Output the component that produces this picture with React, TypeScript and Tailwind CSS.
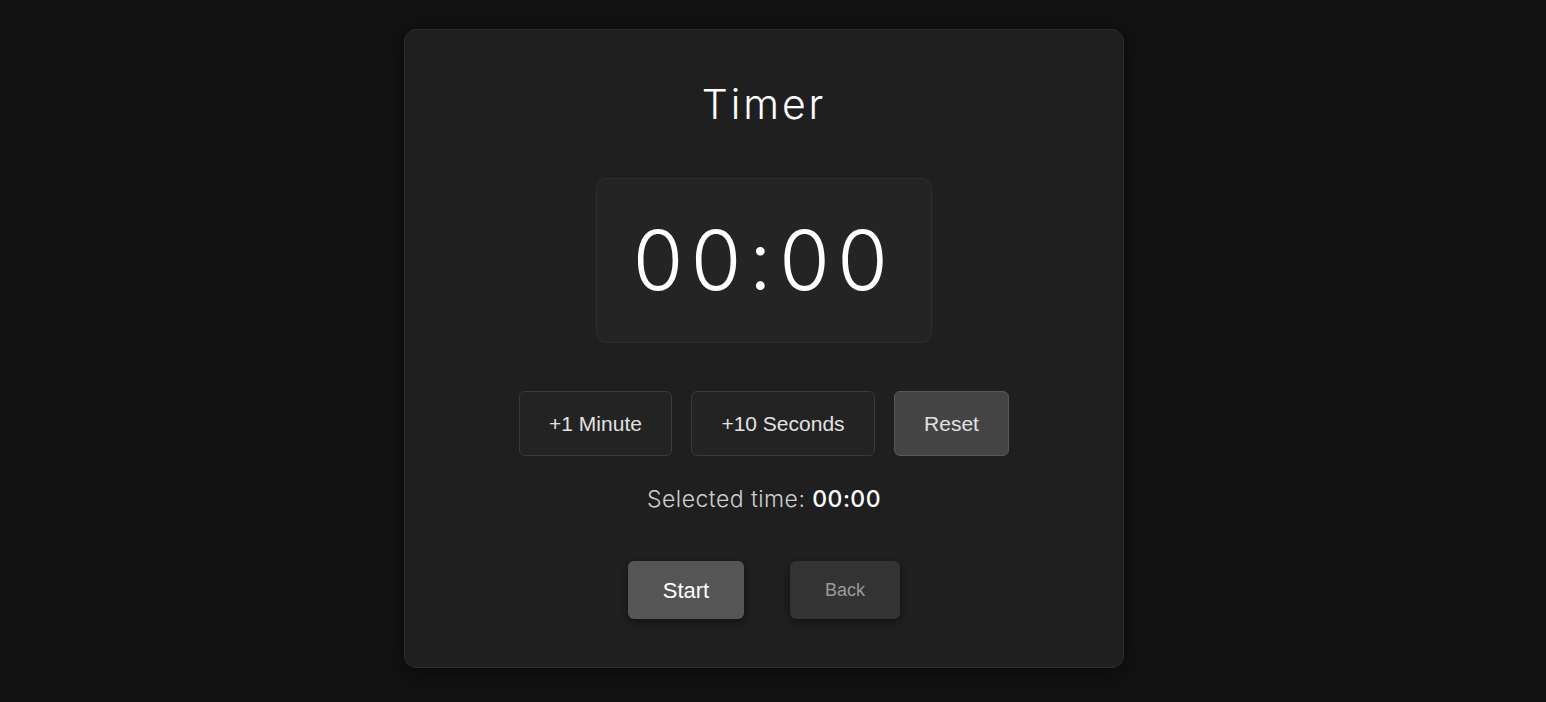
export default function App() {
  return (
    <div className="flex min-h-[702px] w-full justify-center bg-[#121212] pr-[18px] pt-[29px] font-['Inter',sans-serif]">
      <div className="flex h-fit w-[720px] flex-col items-center rounded-xl border border-[#2c2c2c] bg-[#1f1f1f] pb-[48px] pt-[50px] shadow-[0_4px_24px_rgba(0,0,0,0.5)]">
        <h1 className="text-[41px] font-light leading-[48px] tracking-[0.07em] text-white">
          Timer
        </h1>

        <div className="mt-[50px] flex h-[165px] w-[336px] items-center justify-center rounded-[10px] border border-[#2e2e2e] bg-[#242424]">
          <span className="text-[82px] font-light leading-none tracking-[0.09em] text-white">
            00:00
          </span>
        </div>

        <div className="mt-[48px] flex gap-[19px] font-['Liberation_Sans',sans-serif] text-[21px] text-[#e2e2e2]">
          <button className="h-[65px] w-[153px] rounded-md border border-[#3a3a3a] bg-[#232323]">
            +1 Minute
          </button>
          <button className="h-[65px] w-[184px] rounded-md border border-[#3a3a3a] bg-[#232323]">
            +10 Seconds
          </button>
          <button className="h-[65px] w-[115px] rounded-md border border-[#575757] bg-[#444444]">
            Reset
          </button>
        </div>

        <p className="mt-[28px] text-[23px] font-light leading-[30px] tracking-[0.02em] text-[#cfcfcf]">
          Selected time: <span className="font-medium text-white">00:00</span>
        </p>

        <div className="mt-[47px] flex gap-[46px] font-['Liberation_Sans',sans-serif]">
          <button className="h-[58px] w-[116px] rounded-md bg-[#555555] text-[22px] text-white shadow-[0_3px_8px_rgba(0,0,0,0.45)]">
            Start
          </button>
          <button className="h-[58px] w-[110px] rounded-md bg-[#333333] text-[18px] text-[#9a9a9a] shadow-[0_3px_8px_rgba(0,0,0,0.45)]">
            Back
          </button>
        </div>
      </div>
    </div>
  );
}
